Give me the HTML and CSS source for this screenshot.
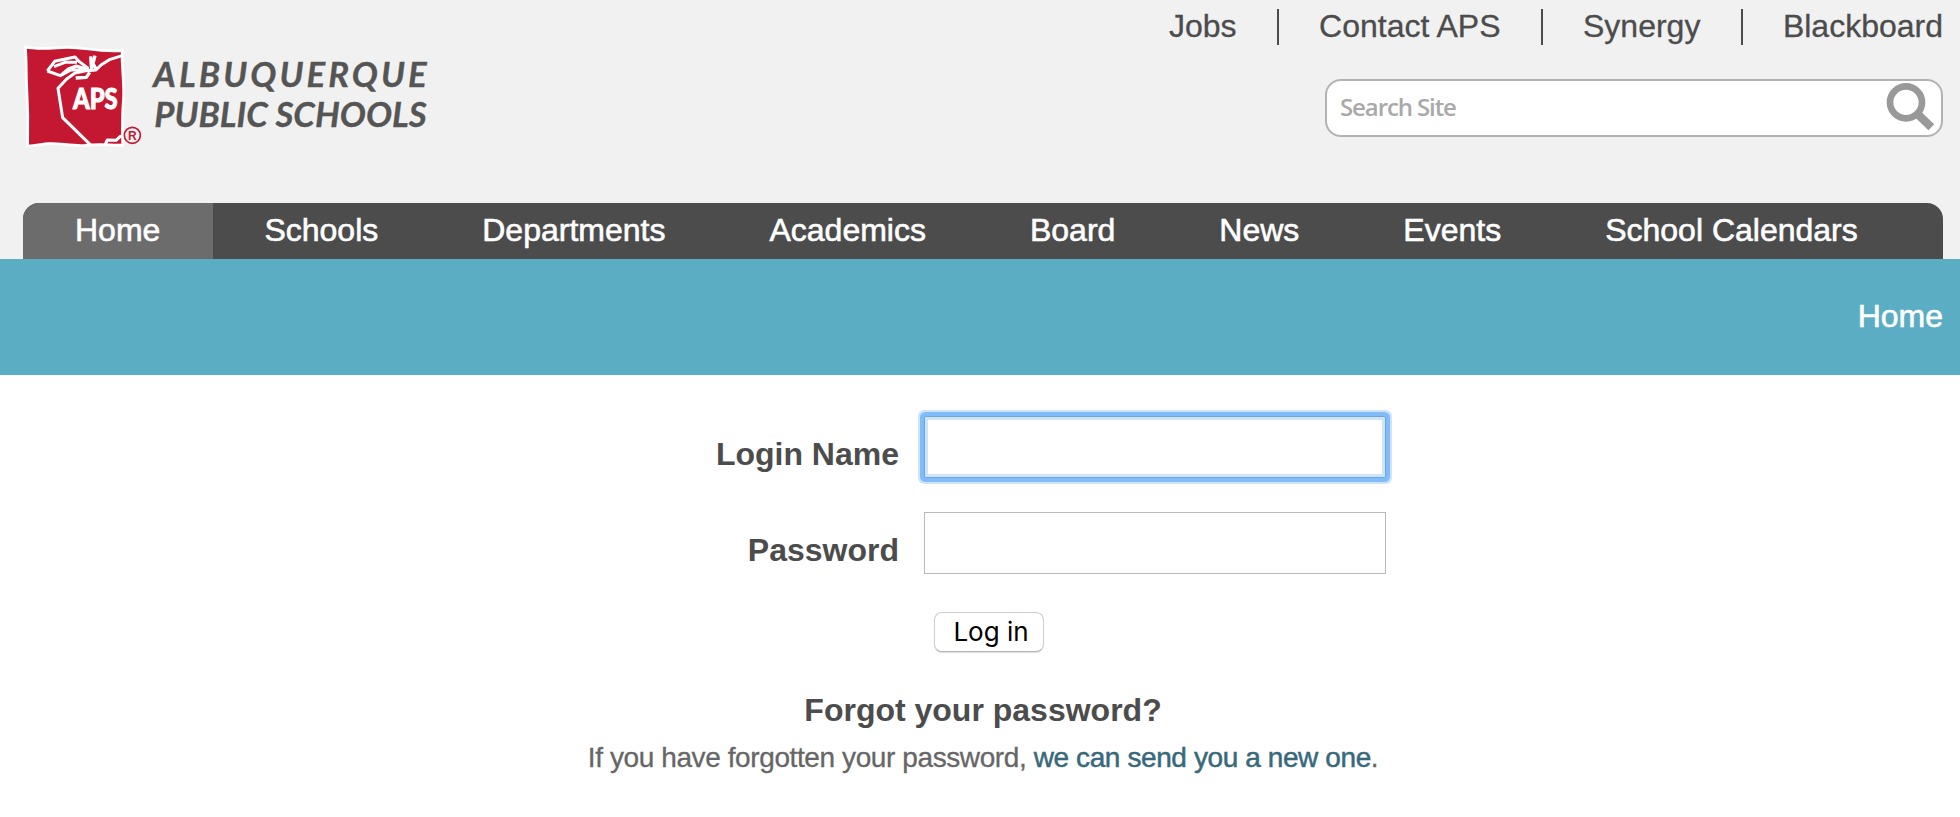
FILE: index.html
```
<!DOCTYPE html>
<html lang="en">
<head>
	<meta charset="UTF-8">
	<title>Albuquerque Public Schools</title>
	<link rel="stylesheet" href="styles.css">
</head>
<body>
	<div id="top">
		<header id="header">
			<a class="logo" href="#">
				<svg width="450" height="130" viewBox="0 0 1350 390">
					<g transform="translate(45,15)">
						<path fill="#c41832" stroke="#fff" stroke-width="8" d="M31 36 C70 45 110 39 155 37 C215 36 240 52 322 47 C318 90 330 150 325 200 C321 240 322 280 323 330 C290 333 270 325 210 331 C170 334 130 323 100 326 C80 328 60 332 38 333 C40 250 38 200 35 150 C33 110 35 80 31 36 Z"/>
						<g fill="none" stroke="#fff" stroke-linejoin="round">
							<path stroke-width="9" d="M322 62 L283 74 L258 90 L243 105 L212 107 L180 114 L155 132 L129 160 L143 248 L228 331"/>
							<path stroke-width="9" d="M97 108 L119 79 L180 66 L193 80 L220 100 M97 108 L136 122 L160 102 L184 93 L214 102 M117 95 L150 82 L186 82 M136 122 L168 105 L222 104"/>
							<path stroke-width="10" d="M230 108 L227 64 M240 62 L234 86 L244 104 M182 129 L214 127 L224 112"/>
							<path stroke-width="9" d="M270 330 L277 315 L303 316 L316 304 L325 301"/>
						</g>
						<text x="174" y="223" class="aps" textLength="134" lengthAdjust="spacingAndGlyphs">APS</text>
						<circle cx="352" cy="301" r="24" fill="none" stroke="#c41832" stroke-width="5"/>
						<text x="352" y="314" class="reg">R</text>
					</g>
					<text x="460" y="170" class="logo-text" textLength="820">ALBUQUERQUE</text>
					<text x="463" y="292" class="logo-text" textLength="817">PUBLIC SCHOOLS</text>
				</svg>
			</a>
			<div class="tools">
				<ul class="links">
					<li><a href="#">Jobs</a></li>
					<li><a href="#">Contact APS</a></li>
					<li><a href="#">Synergy</a></li>
					<li><a href="#">Blackboard</a></li>
				</ul>
				<form class="search">
					<input type="text" placeholder="Search Site">
					<svg width="50" height="50" viewBox="0 0 150 150">
						<circle cx="60" cy="58" r="48" fill="none" stroke="#999" stroke-width="20"/>
						<path d="M92 91 L136 133" stroke="#999" stroke-width="25"/>
					</svg>
				</form>
			</div>
		</header>
		<ul id="nav">
			<li class="selected"><a href="#">Home</a></li>
			<li><a href="#">Schools</a></li>
			<li><a href="#">Departments</a></li>
			<li><a href="#">Academics</a></li>
			<li><a href="#">Board</a></li>
			<li><a href="#">News</a></li>
			<li><a href="#">Events</a></li>
			<li><a href="#">School Calendars</a></li>
		</ul>
	</div>
	<div id="breadcrumb"><a href="#">Home</a></div>
	<div id="content">
		<form id="login">
			<label for="name">Login Name</label>
			<input type="text" id="name" class="focus">
			<label for="password">Password</label>
			<input type="password" id="password">
			<button type="button">Log in</button>
		</form>
		<h2>Forgot your password?</h2>
		<p>If you have forgotten your password, <a href="#">we can send you a new one</a>.</p>
	</div>
</body>
</html>
```

FILE: styles.css
```
* {
	box-sizing: border-box;
}
body {
	margin: 0;
	background: #fff;
	color: #4c4c4c;
	font: 32px/36px "Liberation Sans", Arial, sans-serif;
}
a {
	color: inherit;
	text-decoration: none;
}
ul {
	margin: 0;
	padding: 0;
	list-style: none;
}

/* header */
#top {
	background: #f1f1f1;
}
#header {
	display: flex;
	justify-content: space-between;
	height: 203px;
	padding-right: 17px;
}
.logo {
	margin-top: 30px;
}
.logo svg {
	display: block;
}
.logo-text {
	font: italic bold 104px Lato, sans-serif;
	fill: #555;
	stroke: #555;
	stroke-width: 1px;
}
.aps {
	font: 900 84px Lato, sans-serif;
	fill: #fff;
	stroke: #fff;
	stroke-width: 3px;
}
.reg {
	font: bold 36px "Liberation Sans", sans-serif;
	fill: #c41832;
	text-anchor: middle;
}
.tools {
	display: flex;
	flex-direction: column;
	align-items: flex-end;
	padding-top: 9px;
}
.links {
	display: flex;
	-webkit-text-stroke: .3px #4c4c4c;
}
.links li + li {
	margin-left: 40.5px;
	padding-left: 40px;
	border-left: 2px solid #4c4c4c;
}
.links a {
	position: relative;
	top: -1px;
}
.search {
	display: flex;
	align-items: flex-start;
	width: 618px;
	height: 58px;
	margin-top: 34px;
	border: 2px solid #b2b2b2;
	border-radius: 16px;
	background: #fff;
}
.search input {
	flex: 1;
	height: 50px;
	padding: 0 0 0 13px;
	border: 0;
	outline: 0;
	background: none;
	font: 600 24px "Open Sans", sans-serif;
	letter-spacing: -1.1px;
}
.search input::placeholder {
	color: #a9a9a9;
}
.search svg {
	margin: 2px 5px 0 0;
}

/* navigation */
#nav {
	display: flex;
	height: 56px;
	margin: 0 17px 0 23px;
	overflow: hidden;
	border-radius: 16px 16px 0 0;
	background: #4c4c4c;
	color: #fff;
	line-height: 54px;
	-webkit-text-stroke: .6px #fff;
}
#nav li {
	padding: 0 52px;
}
#nav .selected {
	width: 190px;
	margin-right: -.6px;
	background: #6c6c6c;
}
#breadcrumb {
	height: 116px;
	padding-right: 17px;
	background: #5aadc2;
	color: #fff;
	line-height: 114px;
	text-align: right;
	-webkit-text-stroke: .6px #fff;
}

/* login form */
#content {
	padding: 41px 17px 0 23px;
	text-align: center;
}
#login {
	display: grid;
	grid-template-columns: 876px 462px;
	column-gap: 25px;
	row-gap: 34px;
}
#login label {
	padding-top: 20px;
	font-weight: bold;
	text-align: right;
}
#login input {
	width: 462px;
	height: 62px;
	padding: 0 10px;
	border: 1px solid #bbb;
	outline: 0;
	font-size: 32px;
}
#login .focus {
	border-color: #69a6e2;
	border-radius: 2px;
	box-shadow: 0 0 0 4px #82bcf8, 0 0 0 6px #cfe4fb, inset 0 0 0 3px #cfe4fb;
}
#login button {
	grid-column: 2;
	width: 110px;
	height: 40px;
	margin: 4px 0 0 10px;
	padding: 0 0 0 4px;
	border: 1px solid #cfcfcf;
	border-bottom-color: #b5b5b5;
	border-radius: 8px;
	background: #fff;
	box-shadow: 0 1px 1px #ddd;
	color: #000;
	font: 26px/38px Inter, sans-serif;
}
h2 {
	margin: 40px 0 0;
	font-size: 32px;
	line-height: 36px;
}
p {
	margin: 12px 0 0;
	color: #666;
	font-size: 28px;
	line-height: 36px;
	letter-spacing: -.4px;
	-webkit-text-stroke: .3px #666;
}
p a {
	color: #37697b;
	-webkit-text-stroke: .5px #37697b;
}
```
